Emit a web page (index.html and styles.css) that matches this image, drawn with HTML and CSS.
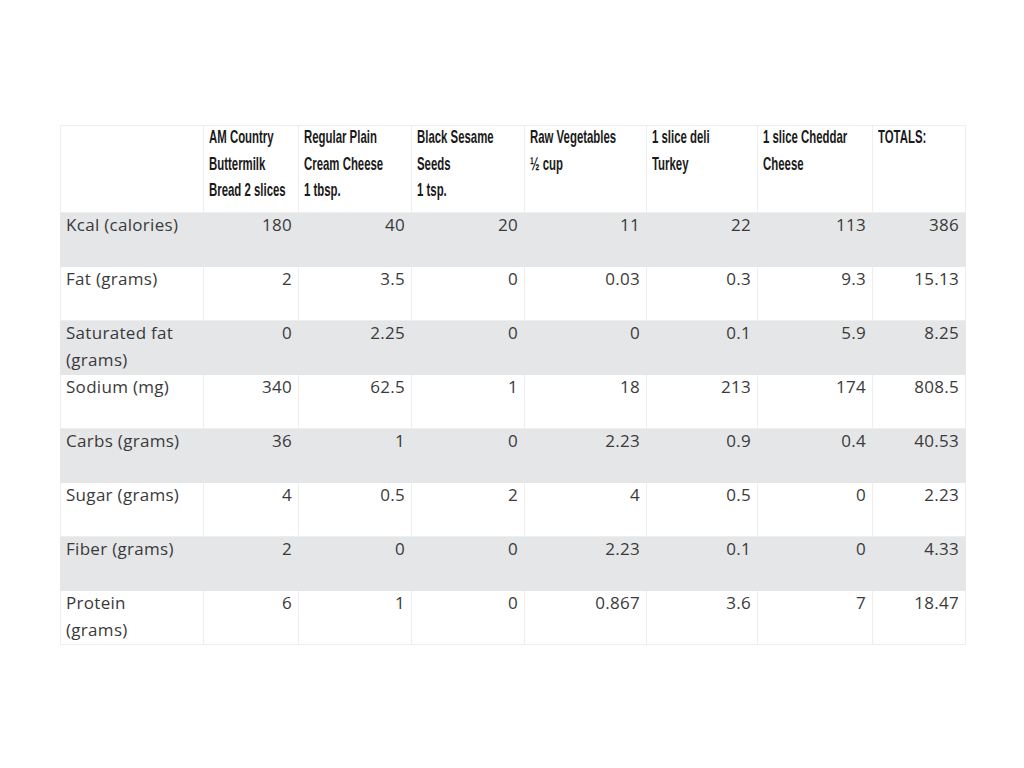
FILE: index.html
```html
<!DOCTYPE html>
<html>
<head>
<meta charset="utf-8">
<link rel="stylesheet" href="styles.css">
</head>
<body>
<div class="page">
<table class="nutrition">
<colgroup>
<col class="c0"><col class="c1"><col class="c2"><col class="c3"><col class="c4"><col class="c5"><col class="c6"><col class="c7">
</colgroup>
<thead>
<tr>
<th></th>
<th><div class="cond">AM Country<br>Buttermilk<br>Bread 2 slices</div></th>
<th><div class="cond">Regular Plain<br>Cream Cheese<br>1 tbsp.</div></th>
<th><div class="cond">Black Sesame<br>Seeds<br>1 tsp.</div></th>
<th><div class="cond">Raw Vegetables<br>½ cup</div></th>
<th><div class="cond">1 slice deli<br>Turkey</div></th>
<th><div class="cond">1 slice Cheddar<br>Cheese</div></th>
<th><div class="cond">TOTALS:</div></th>
</tr>
</thead>
<tbody>
<tr class="alt"><td><div class="v">Kcal (calories)</div></td><td><div class="v">180</div></td><td><div class="v">40</div></td><td><div class="v">20</div></td><td><div class="v">11</div></td><td><div class="v">22</div></td><td><div class="v">113</div></td><td><div class="v">386</div></td></tr>
<tr><td><div class="v">Fat (grams)</div></td><td><div class="v">2</div></td><td><div class="v">3.5</div></td><td><div class="v">0</div></td><td><div class="v">0.03</div></td><td><div class="v">0.3</div></td><td><div class="v">9.3</div></td><td><div class="v">15.13</div></td></tr>
<tr class="alt"><td><div class="v">Saturated fat (grams)</div></td><td><div class="v">0</div></td><td><div class="v">2.25</div></td><td><div class="v">0</div></td><td><div class="v">0</div></td><td><div class="v">0.1</div></td><td><div class="v">5.9</div></td><td><div class="v">8.25</div></td></tr>
<tr><td><div class="v">Sodium (mg)</div></td><td><div class="v">340</div></td><td><div class="v">62.5</div></td><td><div class="v">1</div></td><td><div class="v">18</div></td><td><div class="v">213</div></td><td><div class="v">174</div></td><td><div class="v">808.5</div></td></tr>
<tr class="alt"><td><div class="v">Carbs (grams)</div></td><td><div class="v">36</div></td><td><div class="v">1</div></td><td><div class="v">0</div></td><td><div class="v">2.23</div></td><td><div class="v">0.9</div></td><td><div class="v">0.4</div></td><td><div class="v">40.53</div></td></tr>
<tr><td><div class="v">Sugar (grams)</div></td><td><div class="v">4</div></td><td><div class="v">0.5</div></td><td><div class="v">2</div></td><td><div class="v">4</div></td><td><div class="v">0.5</div></td><td><div class="v">0</div></td><td><div class="v">2.23</div></td></tr>
<tr class="alt"><td><div class="v">Fiber (grams)</div></td><td><div class="v">2</div></td><td><div class="v">0</div></td><td><div class="v">0</div></td><td><div class="v">2.23</div></td><td><div class="v">0.1</div></td><td><div class="v">0</div></td><td><div class="v">4.33</div></td></tr>
<tr><td><div class="v">Protein (grams)</div></td><td><div class="v">6</div></td><td><div class="v">1</div></td><td><div class="v">0</div></td><td><div class="v">0.867</div></td><td><div class="v">3.6</div></td><td><div class="v">7</div></td><td><div class="v">18.47</div></td></tr>
</tbody>
</table>
</div>
</body>
</html>
```

FILE: styles.css
```css
html, body {
  margin: 0;
  padding: 0;
  background: #ffffff;
}

.page {
  padding: 125px 0 0 60px;
}

.nutrition {
  border-collapse: collapse;
  table-layout: fixed;
  width: 905px;
  font-family: "Open Sans", Lato, sans-serif;
  font-weight: 400;
  color: #3a3a3a;
}

.c0 { width: 143px; }
.c1 { width: 95px; }
.c2 { width: 113px; }
.c3 { width: 113px; }
.c4 { width: 122px; }
.c5 { width: 111px; }
.c6 { width: 115px; }
.c7 { width: 93px; }

.nutrition th,
.nutrition td {
  border: 1px solid #eeeeee;
  vertical-align: top;
  padding: 0 6px 0 5px;
}

.nutrition th {
  height: 87px;
  box-sizing: border-box;
  text-align: left;
  font-family: "Liberation Sans", Arial, sans-serif;
  font-weight: bold;
  font-size: 19px;
  line-height: 26.5px;
  color: #1a1a1a;
  white-space: nowrap;
}

.cond {
  transform: scaleX(0.6);
  transform-origin: 0 0;
  margin-top: -2px;
}

.nutrition td {
  height: 54px;
  box-sizing: border-box;
  font-size: 17px;
  letter-spacing: 0.3px;
  line-height: 27px;
  text-align: right;
}

.v {
  margin-top: -2px;
}

.nutrition td:first-child {
  text-align: left;
  padding-right: 20px;
}

.nutrition tr.alt td {
  background: #e5e6e8;
  border-color: #e5e6e8;
}
```
